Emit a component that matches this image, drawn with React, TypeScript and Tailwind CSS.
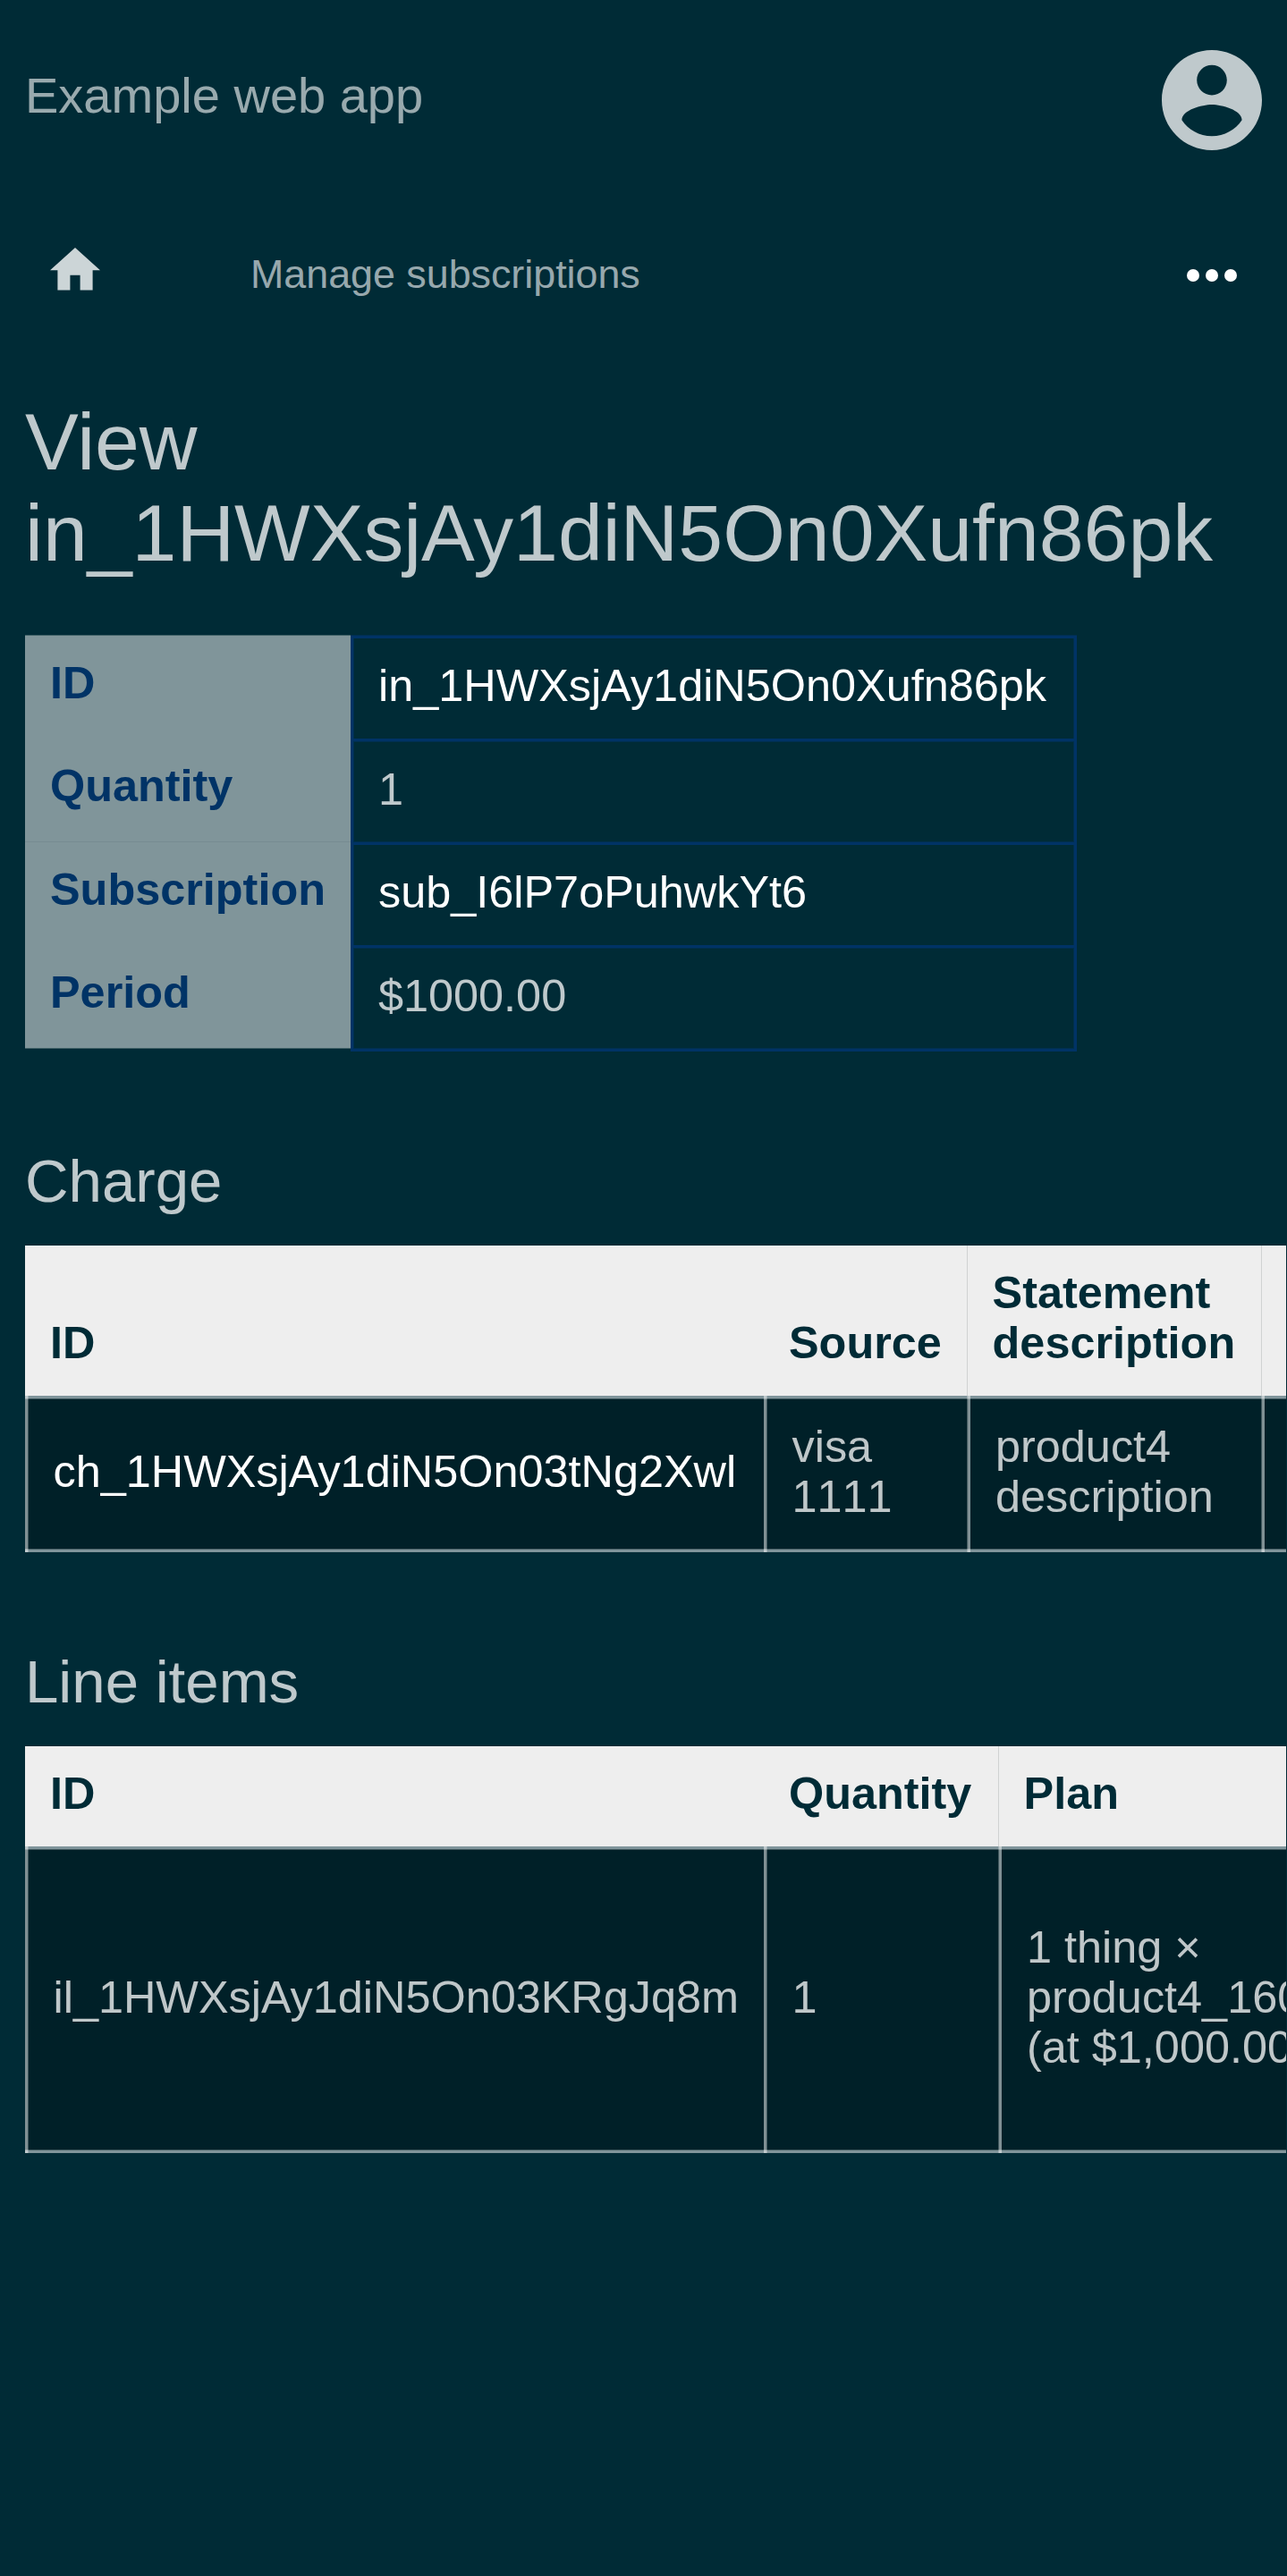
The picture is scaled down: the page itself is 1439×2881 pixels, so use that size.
const summary = [
  {
    label: "ID",
    value: "in_1HWXsjAy1diN5On0Xufn86pk",
    labelClass: "h-[115px]",
    valueClass: "h-[115px] pt-[25px] text-white shadow-[inset_1px_0_#002f4e,inset_-1px_0_#002f4e]",
  },
  {
    label: "Quantity",
    value: "1",
    labelClass: "h-[116px] border-b border-[#778c92]",
    valueClass: "h-[116px] pt-[26px] shadow-[inset_1px_1px_#002f4e,inset_-1px_-1px_#002f4e]",
  },
  {
    label: "Subscription",
    value: "sub_I6lP7oPuhwkYt6",
    labelClass: "h-[115px]",
    valueClass: "h-[115px] pt-[25px] text-white shadow-[inset_1px_0_#002f4e,inset_-1px_0_#002f4e]",
  },
  {
    label: "Period",
    value: "$1000.00",
    labelClass: "h-[116px] border-b border-[#406066]",
    valueClass: "h-[116px] pt-[26px] shadow-[inset_1px_1px_#002f4e,inset_-1px_-1px_#002f4e]",
  },
];

function AccountIcon() {
  return (
    <svg viewBox="2 2 20 20" className="size-28" fill="currentColor">
      <path d="M12 2C6.48 2 2 6.48 2 12s4.48 10 10 10 10-4.48 10-10S17.52 2 12 2zm0 3c1.66 0 3 1.34 3 3s-1.34 3-3 3-3-1.34-3-3 1.34-3 3-3zm0 14.2c-2.5 0-4.71-1.28-6-3.22.03-1.99 4-3.08 6-3.08 1.99 0 5.97 1.09 6 3.08-1.29 1.94-3.5 3.22-6 3.22z" />
    </svg>
  );
}

function HomeIcon() {
  return (
    <svg viewBox="2 3 20 17" className="h-[47.6px] w-14" fill="currentColor">
      <path d="M10 20v-6h4v6h5v-8h3L12 3 2 12h3v8z" />
    </svg>
  );
}

function MoreIcon() {
  return (
    <svg viewBox="0 0 56 14" className="h-3.5 w-14" fill="currentColor">
      <circle cx="7" cy="7" r="7" />
      <circle cx="28" cy="7" r="7" />
      <circle cx="49" cy="7" r="7" />
    </svg>
  );
}

const head = "flex shrink-0 items-end bg-[#eee] pb-[31px] font-bold text-[#002b36]";
const seam = "border-l border-[#d0d2d2] pl-[27.6px]";

// Body cells draw their left rule over the row's top and bottom rules, so crossings are lighter.
const cell =
  "relative flex shrink-0 items-center bg-black/25 pb-[5px] shadow-[inset_0_1px_rgba(255,255,255,0.25),inset_0_-1px_rgba(255,255,255,0.25)] before:absolute before:-top-[3px] before:-bottom-[3px] before:left-0 before:w-1 before:bg-white/50 before:bg-clip-padding before:border-white/25";
const ruleRight = "pl-[31.5px] before:border-r";
const ruleLeft = "pl-8 before:border-l";

export default function App() {
  return (
    <div className="h-[2881px] w-[1439px] overflow-hidden bg-[#002b36] font-['Liberation_Sans',Arial,sans-serif] text-[50.4px] leading-[56px] text-white/75">
      <header className="flex h-56 items-start justify-between px-7 pt-14">
        <div className="pt-[19px] text-[56px] leading-[64px] text-white/60">Example web app</div>
        <AccountIcon />
      </header>
      <nav className="flex h-42 items-center px-14">
        <span className="-mt-3.5 text-white/80"><HomeIcon /></span>
        <span className="mb-1 ml-[168px] text-[44.8px] leading-[52px] text-white/60">Manage subscriptions</span>
        <span className="ml-auto text-white"><MoreIcon /></span>
      </nav>
      <h1 className="h-[319px] px-7 pt-[51px] text-[89.6px] leading-[102px]">
        View<br />in_1HWXsjAy1diN5On0Xufn86pk
      </h1>
      <section className="ml-7 flex h-[465px] items-start">
        <div className="w-[364px] bg-[#80959a] font-bold text-[#003366] shadow-[0_-1px_#406066]">
          {summary.map((r) => (
            <div key={r.label} className={`pl-7 pt-[25px] ${r.labelClass}`}>{r.label}</div>
          ))}
        </div>
        <div className="w-[812px] border-x-[3px] border-t-[3px] border-[#003366] shadow-[0_-1px_#002f4e]">
          {summary.map((r) => (
            <div key={r.label} className={`border-b-[3px] border-[#003366] pl-7 ${r.valueClass}`}>{r.value}</div>
          ))}
        </div>
      </section>
      <h2 className="h-[217px] pl-7 pt-[106px] text-[67.2px] leading-[77px]">Charge</h2>
      <section className="ml-7 w-[1410px] overflow-hidden">
        <div className="flex h-42">
          <div className={`w-[826px] pl-7 ${head}`}>ID</div>
          <div className={`w-[227px] pl-7 ${head}`}>Source</div>
          <div className={`w-[329px] ${seam} ${head}`}>Statement<br />description</div>
          <div className={`w-[28px] ${seam} ${head}`} />
        </div>
        <div className="flex h-[175px] border-y-[3px] border-white/50">
          <div className={`w-[826px] text-white ${ruleRight} ${cell}`}>ch_1HWXsjAy1diN5On03tNg2Xwl</div>
          <div className={`w-[227px] [font-kerning:none] ${ruleRight} ${cell}`}>visa<br />1111</div>
          <div className={`w-[329px] ${ruleLeft} ${cell}`}>product4<br />description</div>
          <div className={`w-[28px] ${ruleLeft} ${cell}`} />
        </div>
      </section>
      <h2 className="h-[217px] pl-7 pt-[106px] text-[67.2px] leading-[77px]">Line items</h2>
      <section className="ml-7 w-[1410px] overflow-hidden">
        <div className="flex h-28">
          <div className={`w-[826px] pl-7 ${head}`}>ID</div>
          <div className={`w-[262px] pl-7 ${head}`}>Quantity</div>
          <div className={`w-[322px] ${seam} ${head}`}>Plan</div>
        </div>
        <div className="flex h-[343px] border-y-[3px] border-white/50">
          <div className={`w-[826px] ${ruleRight} ${cell}`}>il_1HWXsjAy1diN5On03KRgJq8m</div>
          <div className={`w-[262px] ${ruleRight} ${cell}`}>1</div>
          <div className={`w-[322px] whitespace-nowrap ${ruleLeft} ${cell}`}>1 thing ×<br />product4_160<br />(at $1,000.00</div>
        </div>
      </section>
    </div>
  );
}
